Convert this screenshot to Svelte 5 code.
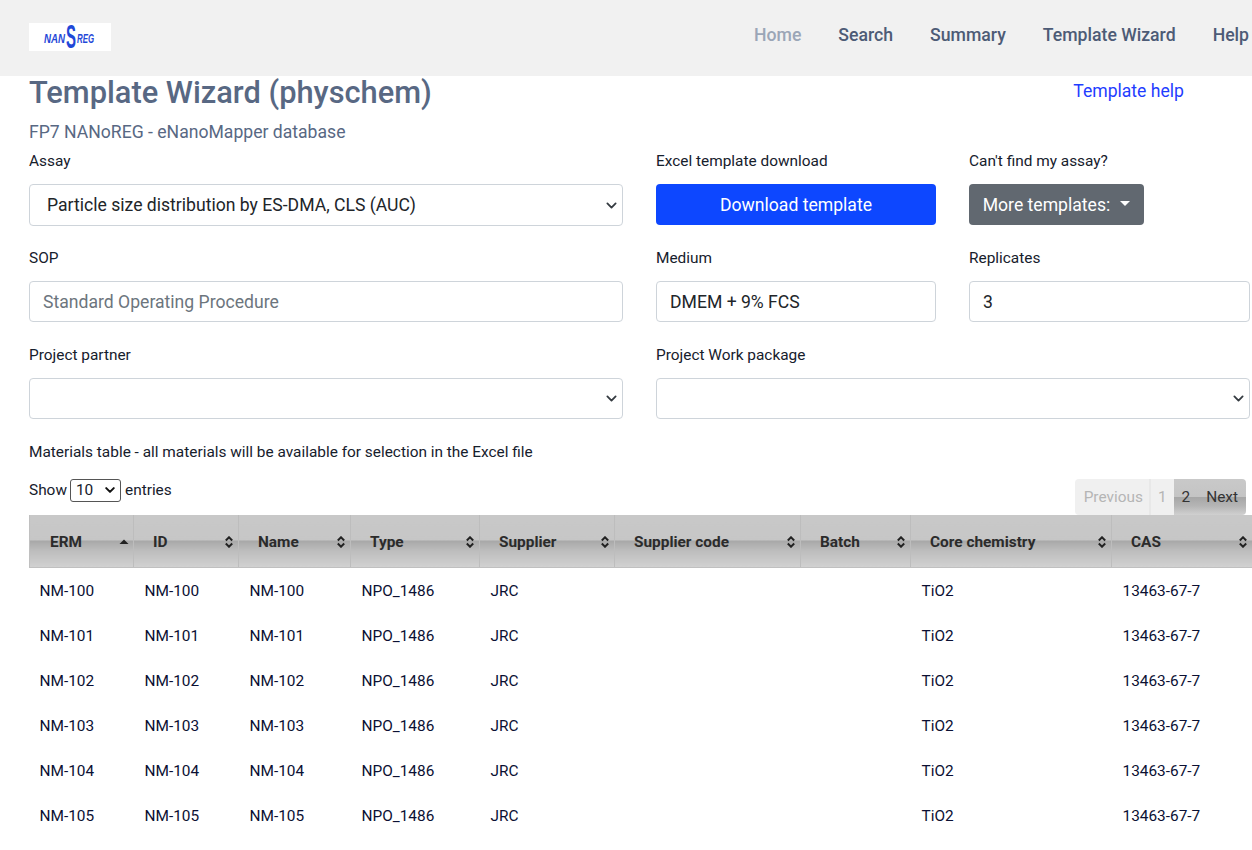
<script>
    const navLinks = ['Home', 'Search', 'Summary', 'Template Wizard', 'Help'];
    const columns = [
        { title: 'ERM', width: 104, sorted: true },
        { title: 'ID', width: 105 },
        { title: 'Name', width: 112 },
        { title: 'Type', width: 129 },
        { title: 'Supplier', width: 135 },
        { title: 'Supplier code', width: 186 },
        { title: 'Batch', width: 110 },
        { title: 'Core chemistry', width: 201 },
        { title: 'CAS', width: 141 }
    ];
    const materials = ['NM-100', 'NM-101', 'NM-102', 'NM-103', 'NM-104', 'NM-105'];
</script>

<header class="navbar">
    <svg class="logo" viewBox="0 0 82 28">
        <text x="15" y="20" font-size="13" textLength="21" lengthAdjust="spacingAndGlyphs">NAN</text>
        <text x="37" y="25" font-size="34" class="logo-s" textLength="10" lengthAdjust="spacingAndGlyphs">S</text>
        <text x="48" y="20" font-size="13" textLength="17" lengthAdjust="spacingAndGlyphs">REG</text>
    </svg>
    <nav>
        {#each navLinks as link, i}
            <span class="nav-link" class:active={i === 0}>{link}</span>
        {/each}
    </nav>
</header>

<main class="page">
    <div class="title-row">
        <div>
            <h1>Template Wizard (physchem)</h1>
            <p class="subtitle">FP7 NANoREG - eNanoMapper database</p>
        </div>
        <span class="help-link">Template help</span>
    </div>

    <div class="form-row three first">
        <div class="field">
            <span class="label">Assay</span>
            <div class="select-box assay">
                <span>Particle size distribution by ES-DMA, CLS (AUC)</span>
                <svg class="chevron" viewBox="0 0 16 16"><path d="M2 5l6 6 6-6" /></svg>
            </div>
        </div>
        <div class="field">
            <span class="label">Excel template download</span>
            <button class="btn primary">Download template</button>
        </div>
        <div class="field">
            <span class="label">Can't find my assay?</span>
            <button class="btn secondary">More templates:<span class="caret"></span></button>
        </div>
    </div>

    <div class="form-row three">
        <div class="field">
            <span class="label">SOP</span>
            <div class="input placeholder">Standard Operating Procedure</div>
        </div>
        <div class="field">
            <span class="label">Medium</span>
            <div class="input">DMEM + 9% FCS</div>
        </div>
        <div class="field">
            <span class="label">Replicates</span>
            <div class="input">3</div>
        </div>
    </div>

    <div class="form-row two">
        <div class="field">
            <span class="label">Project partner</span>
            <div class="select-box">
                <svg class="chevron" viewBox="0 0 16 16"><path d="M2 5l6 6 6-6" /></svg>
            </div>
        </div>
        <div class="field">
            <span class="label">Project Work package</span>
            <div class="select-box">
                <svg class="chevron" viewBox="0 0 16 16"><path d="M2 5l6 6 6-6" /></svg>
            </div>
        </div>
    </div>

    <p class="table-note">Materials table - all materials will be available for selection in the Excel file</p>

    <div class="table-tools">
        <div class="entries">
            Show
            <div class="mini-select">
                <span>10</span>
                <svg class="chevron small" viewBox="0 0 16 16"><path d="M2 5l6 6 6-6" /></svg>
            </div>
            entries
        </div>
        <div class="pager">
            <span class="page-btn disabled prev">Previous</span>
            <span class="page-btn disabled one">1</span>
            <div class="pager-on">
                <span class="page-btn">2</span>
                <span class="page-btn">Next</span>
            </div>
        </div>
    </div>

    <table>
        <thead>
            <tr>
                {#each columns as col}
                    <th style="width: {col.width}px">
                        <div class="th-inner">
                            <span>{col.title}</span>
                            {#if col.sorted}
                                <svg class="sort" viewBox="0 0 10 12"><path class="fill" d="M0.5 8l4.5-4.5 4.5 4.5z" /></svg>
                            {:else}
                                <svg class="sort" viewBox="0 0 10 12"><path d="M1.8 4.5L5 1.3l3.2 3.2M1.8 7.5L5 10.7l3.2-3.2" /></svg>
                            {/if}
                        </div>
                    </th>
                {/each}
            </tr>
        </thead>
        <tbody>
            {#each materials as nm}
                <tr>
                    <td>{nm}</td>
                    <td>{nm}</td>
                    <td>{nm}</td>
                    <td>NPO_1486</td>
                    <td>JRC</td>
                    <td></td>
                    <td></td>
                    <td>TiO2</td>
                    <td>13463-67-7</td>
                </tr>
            {/each}
        </tbody>
    </table>
</main>

<style>
    :global(body) {
        margin: 0;
        overflow: hidden;
        background: #fff;
        font-family: Roboto, "Liberation Sans", sans-serif;
        color: #212529;
    }
    .navbar {
        height: 76px;
        background: #f1f1f1;
        display: flex;
        align-items: center;
        justify-content: space-between;
        padding-left: 29px;
        overflow: hidden;
    }
    .logo {
        width: 82px;
        height: 28px;
        margin-top: -2px;
        background: #fff;
        flex: none;
    }
    .logo text {
        font-family: "Liberation Sans", sans-serif;
        font-style: italic;
        font-weight: 700;
        fill: #1f48d8;
    }
    .logo .logo-s {
        font-style: normal;
    }
    nav {
        display: flex;
        flex: none;
        gap: 37px;
        margin-top: -6px;
        width: 498px;
        white-space: nowrap;
    }
    .nav-link {
        font-size: 17.65px;
        font-weight: 500;
        color: #4d5b76;
    }
    .nav-link.active {
        color: #9ba6b7;
    }
    .page {
        width: 1221px;
        margin-left: 29px;
        font-size: 15.4px;
    }
    .title-row {
        display: flex;
        justify-content: space-between;
        align-items: flex-start;
        height: 74px;
    }
    h1 {
        margin: 0;
        font-size: 30.8px;
        line-height: 33px;
        font-weight: 500;
        color: #586883;
    }
    .subtitle {
        margin: 13px 0 0;
        font-size: 17.6px;
        line-height: 21px;
        color: #586883;
    }
    .help-link {
        font-size: 17.6px;
        line-height: 30px;
        color: #1f3dff;
        margin-right: 66px;
    }
    .form-row {
        display: grid;
        gap: 33px;
        margin-bottom: 22px;
    }
    .form-row.first {
        margin-bottom: 21px;
    }
    .three {
        grid-template-columns: 594px 280px 1fr;
    }
    .two {
        grid-template-columns: 594px 1fr;
    }
    .field {
        display: flex;
        flex-direction: column;
    }
    .label {
        line-height: 22px;
        margin-bottom: 12px;
        color: #16202c;
    }
    .input, .select-box {
        box-sizing: border-box;
        height: 41px;
        border: 1px solid #ced4da;
        border-radius: 4px;
        background: #fff;
        font-size: 17.6px;
        padding: 0 13px;
        display: flex;
        align-items: center;
        justify-content: space-between;
    }
    .select-box.assay {
        padding-left: 17px;
        height: 42px;
    }
    .placeholder {
        color: #6c757d;
    }
    .chevron {
        width: 11px;
        height: 11px;
        margin-left: auto;
        margin-right: -8px;
        fill: none;
        stroke: #343a40;
        stroke-width: 2.6;
        stroke-linecap: round;
        stroke-linejoin: round;
    }
    .btn {
        box-sizing: border-box;
        height: 41px;
        border: none;
        border-radius: 4px;
        font-family: inherit;
        font-size: 17.6px;
        color: #fff;
    }
    .primary {
        background: #0d47ff;
    }
    .secondary {
        background: #616870;
        width: 175px;
        display: flex;
        align-items: center;
        justify-content: center;
    }
    .caret {
        margin-left: 10px;
        margin-bottom: 3px;
        border-top: 5px solid #fff;
        border-left: 5px solid transparent;
        border-right: 5px solid transparent;
    }
    .table-note {
        margin: 0;
        line-height: 22px;
        color: #16202c;
    }
    .table-tools {
        display: flex;
        justify-content: space-between;
        align-items: flex-start;
        height: 38px;
        margin-top: 14px;
    }
    .entries {
        display: flex;
        align-items: center;
        gap: 3px;
        line-height: 26px;
        color: #16202c;
    }
    .mini-select {
        box-sizing: border-box;
        width: 51px;
        height: 23px;
        margin-right: 1px;
        border: 1px solid #555;
        border-radius: 3px;
        display: flex;
        align-items: center;
        padding: 0 5px;
    }
    .chevron.small {
        width: 10px;
        height: 10px;
        margin-right: 0;
        stroke: #111;
        stroke-width: 3.2;
    }
    .pager {
        display: flex;
        height: 36px;
        margin-top: 2px;
        margin-right: 4px;
    }
    .page-btn {
        padding: 0 8px;
        line-height: 36px;
        color: #333;
    }
    .page-btn.disabled {
        background: #f0f0f0;
        color: #b5b5b5;
    }
    .page-btn.prev {
        border-radius: 4px 0 0 4px;
        padding: 0 6px 0 9px;
        border-right: 2px solid #e8e8e8;
    }
    .page-btn.one {
        padding: 0 7px;
    }
    .pager-on {
        display: flex;
        border-radius: 0 4px 4px 0;
        background: linear-gradient(to bottom, #c9c9c9 0%, #c4c4c4 49%, #a6a6a6 50%, #b5b5b5 75%, #d0d0d0 100%);
    }
    table {
        width: 1223px;
        table-layout: fixed;
        border-collapse: collapse;
        font-size: 15.4px;
    }
    th {
        box-sizing: border-box;
        height: 52px;
        padding: 2px 4px 0 19px;
        text-align: left;
        font-weight: 700;
        color: #2b2b2b;
        border-right: 1px solid #bdbdbd;
        border-bottom: 1px solid #c0c0c0;
        background: linear-gradient(to bottom, #c8c8c8 0%, #c6c6c6 48%, #a8a8a8 50%, #bcbcbc 68%, #d1d1d1 100%);
    }
    th:first-child {
        border-left: 1px solid #c0c0c0;
        padding-left: 20px;
    }
    .th-inner {
        display: flex;
        align-items: center;
        justify-content: space-between;
    }
    .sort {
        width: 10px;
        height: 12px;
        fill: none;
        stroke: #222;
        stroke-width: 2;
        flex: none;
    }
    .sort .fill {
        fill: #222;
        stroke: none;
    }
    td {
        height: 45px;
        padding: 2px 11px 0;
        box-sizing: border-box;
        color: #0b1033;
        white-space: nowrap;
    }
    td:first-child {
        padding-left: 10px;
    }
</style>
